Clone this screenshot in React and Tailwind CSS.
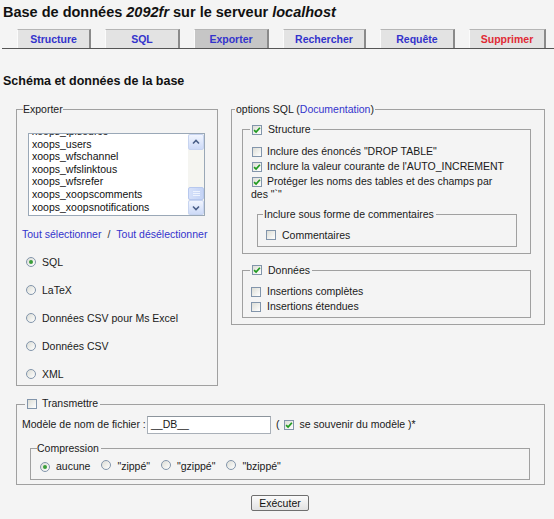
import React from "react";

const Check = ({ checked = false, cls = "" }) => (
  <span
    className={
      "inline-flex items-center justify-center w-[10px] h-[10px] border border-[#8295ab] bg-linear-to-br from-[#dcddd6] to-[#ffffff] shrink-0 align-middle " +
      cls
    }
  >
    {checked && (
      <svg width="8" height="8" viewBox="0 0 8 8">
        <path d="M1.1 4.1 L3.1 6.1 L6.9 1.7" stroke="#1f9a1f" strokeWidth="1.7" fill="none" />
      </svg>
    )}
  </span>
);

const Radio = ({ checked = false }) => (
  <span className="inline-flex items-center justify-center w-[10px] h-[10px] rounded-full border border-[#8295ab] bg-linear-to-br from-[#dcddd6] to-[#ffffff] shrink-0">
    {checked && <span className="w-[4px] h-[4px] rounded-full bg-[#3a9e3a]" />}
  </span>
);

const tabs = [
  { label: "Structure", w: "w-[74px]", active: false, red: false },
  { label: "SQL", w: "w-[75px]", active: false, red: false },
  { label: "Exporter", w: "w-[75px]", active: true, red: false },
  { label: "Rechercher", w: "w-[83px]", active: false, red: false },
  { label: "Requête", w: "w-[75px]", active: false, red: false },
  { label: "Supprimer", w: "w-[77px]", active: false, red: true },
];

const tables = [
  "xoops_tplsource",
  "xoops_users",
  "xoops_wfschannel",
  "xoops_wfslinktous",
  "xoops_wfsrefer",
  "xoops_xoopscomments",
  "xoops_xoopsnotifications",
];

const formats = [
  { label: "SQL", checked: true },
  { label: "LaTeX", checked: false },
  { label: "Données CSV pour Ms Excel", checked: false },
  { label: "Données CSV", checked: false },
  { label: "XML", checked: false },
];

function Scrollbar() {
  return (
    <div className="w-[16px] flex flex-col bg-[#f5f5f1]">
      <div className="h-[16px] flex items-center justify-center bg-linear-to-b from-[#f1f5fe] to-[#cddaf7] border border-[#c7d4f0] rounded-[2px]">
        <svg width="8" height="6" viewBox="0 0 8 6">
          <path d="M1 4.5 L4 1.5 L7 4.5" stroke="#4a5f88" strokeWidth="1.6" fill="none" />
        </svg>
      </div>
      <div className="flex-1" />
      <div className="h-[13px] flex flex-col items-center justify-center gap-[1px] bg-linear-to-r from-[#d6e1fa] to-[#c4d3f5] border border-[#b7c8ee] rounded-[2px]">
        <span className="w-[7px] h-[1px] bg-[#eef3fe]" />
        <span className="w-[7px] h-[1px] bg-[#eef3fe]" />
        <span className="w-[7px] h-[1px] bg-[#eef3fe]" />
      </div>
      <div className="h-[15px] flex items-center justify-center bg-linear-to-b from-[#f1f5fe] to-[#cddaf7] border border-[#c7d4f0] rounded-[2px]">
        <svg width="8" height="6" viewBox="0 0 8 6">
          <path d="M1 1.5 L4 4.5 L7 1.5" stroke="#4a5f88" strokeWidth="1.6" fill="none" />
        </svg>
      </div>
    </div>
  );
}

export default function App() {
  return (
    <div className="w-[554px] min-h-[519px] bg-[#f4f4f4] text-[#1a1a1a] font-['Liberation_Sans',Arial,sans-serif] text-[10.5px] leading-[13px] overflow-hidden">
      <h1 className="pt-[4px] pl-[3px] text-[14.5px] leading-[17px] font-bold text-[#111]">
        Base de données <i>2092fr</i> sur le serveur <i>localhost</i>
      </h1>

      <div className="mt-[8px] ml-[2px] pl-[15px] flex gap-[14px] border-b border-[#555]">
        {tabs.map((t) => (
          <div
            key={t.label}
            className={
              t.w +
              " h-[19px] flex items-center justify-center font-bold text-[10.5px] border-t border-l border-r-2 border-t-[#b5b5b5] border-l-[#fbfbfb] border-r-[#8a8a8a] " +
              (t.active ? "bg-[#c6c6c6] " : "bg-[#e3e3e3] ") +
              (t.red ? "text-[#e02a35]" : "text-[#3333cc]")
            }
          >
            {t.label}
          </div>
        ))}
      </div>

      <h2 className="mt-[25px] pl-[3px] text-[12.5px] leading-[15px] font-bold text-[#111]">
        Schéma et données de la base
      </h2>

      <div className="mt-[14px] pl-[16px] flex items-start gap-[13px]">
        <fieldset className="w-[202px] border border-[#a0a0a0] pb-[5px]">
          <legend className="ml-[6px] leading-[13px]">Exporter</legend>
          <div className="mt-[17px] ml-[11px] w-[177px] h-[83px] border border-[#9aa8b7] bg-white flex overflow-hidden">
            <div className="flex-1 overflow-hidden pl-[3px]">
              <div className="-mt-[9px] leading-[12.6px] text-[#111]">
                {tables.map((n) => (
                  <div key={n} className="whitespace-nowrap">{n}</div>
                ))}
              </div>
            </div>
            <Scrollbar />
          </div>
          <div className="mt-[12px] pl-[5px] h-[12px] flex items-center text-[#3333cc] whitespace-nowrap">
            Tout sélectionner<span className="mx-[6px] text-[#333]">/</span>Tout désélectionner
          </div>
          {formats.map((f) => (
            <div key={f.label} className="mt-[16px] pl-[9px] h-[12px] flex items-center gap-[6px]">
              <Radio checked={f.checked} />
              <span>{f.label}</span>
            </div>
          ))}
        </fieldset>

        <fieldset className="w-[314px] border border-[#a0a0a0] pb-[6px]">
          <legend className="ml-[3px] px-[1px]">
            options SQL (<span className="text-[#3333cc]">Documentation</span>)
          </legend>

          <fieldset className="mt-[7px] ml-[10px] w-[289px] border border-[#a0a0a0] pb-[6px]">
            <legend className="ml-[7px] px-[2px]">
              <span className="inline-flex items-center gap-[6px]">
                <Check checked />
                Structure
              </span>
            </legend>
            <div className="mt-[8px] pl-[8px]">
              <Check cls="ml-[1px] mr-[5px]" />
              Inclure des énoncés "DROP TABLE"
            </div>
            <div className="mt-[2px] pl-[8px]">
              <Check checked cls="ml-[1px] mr-[5px]" />
              Inclure la valeur courante de l'AUTO_INCREMENT
            </div>
            <div className="mt-[2px] pl-[8px]">
              <Check checked cls="ml-[1px] mr-[5px]" />
              Protéger les noms des tables et des champs par
              <br />
              des "`"
            </div>
            <fieldset className="mt-[7px] ml-[14px] w-[260px] border border-[#a0a0a0] pb-[4px]">
              <legend className="ml-[5px] pl-[1px] pr-[2px]">Inclure sous forme de commentaires</legend>
              <div className="mt-[8px] pl-[8px] h-[13px] flex items-center">
                <Check cls="mr-[6px]" />
                Commentaires
              </div>
            </fieldset>
          </fieldset>

          <fieldset className="mt-[10px] ml-[10px] w-[289px] border border-[#a0a0a0] pb-[4px]">
            <legend className="ml-[7px] px-[2px]">
              <span className="inline-flex items-center gap-[6px]">
                <Check checked />
                Données
              </span>
            </legend>
            <div className="mt-[8px] pl-[8px] h-[13px] flex items-center">
              <Check cls="mr-[6px]" />
              Insertions complètes
            </div>
            <div className="mt-[2px] pl-[8px] h-[13px] flex items-center">
              <Check cls="mr-[6px]" />
              Insertions étendues
            </div>
          </fieldset>
        </fieldset>
      </div>

      <fieldset className="mt-[11px] ml-[16px] w-[529px] border border-[#a0a0a0] pb-[4px]">
        <legend className="ml-[8px] px-[2px]">
          <span className="inline-flex items-center gap-[5px]">
            <Check />
            Transmettre
          </span>
        </legend>
        <div className="mt-[4px] pl-[5px] h-[18px] flex items-center whitespace-nowrap">
          <span className="w-[125px]">Modèle de nom de fichier :</span>
          <div className="w-[124px] h-[18px] border border-[#a9b0b8] border-t-[#8c949c] bg-white pl-[3px] flex items-center">
            __DB__
          </div>
          <span className="ml-[5px]">(</span>
          <Check checked cls="ml-[4px] mr-[6px]" />
          se souvenir du modèle )*
        </div>
        <fieldset className="mt-[8px] ml-[13px] w-[500px] border border-[#a0a0a0] pb-[6px]">
          <legend className="ml-[6px] pr-[2px]">Compression</legend>
          <div className="mt-[6px] pl-[9px] h-[12px] flex items-center whitespace-nowrap">
            <Radio checked />
            <span className="ml-[6px]">aucune</span>
            <span className="ml-[11px]"><Radio /></span>
            <span className="ml-[6px]">"zippé"</span>
            <span className="ml-[11px]"><Radio /></span>
            <span className="ml-[6px]">"gzippé"</span>
            <span className="ml-[11px]"><Radio /></span>
            <span className="ml-[6px]">"bzippé"</span>
          </div>
        </fieldset>
      </fieldset>

      <div className="mt-[10px] pl-[6px] flex justify-center">
        <button className="w-[58px] h-[16px] border border-[#6f6f6f] rounded-[2px] bg-linear-to-b from-[#fbfbfb] to-[#e2e2e2] text-[10.5px] leading-[14px] text-[#111]">
          Exécuter
        </button>
      </div>
    </div>
  );
}
